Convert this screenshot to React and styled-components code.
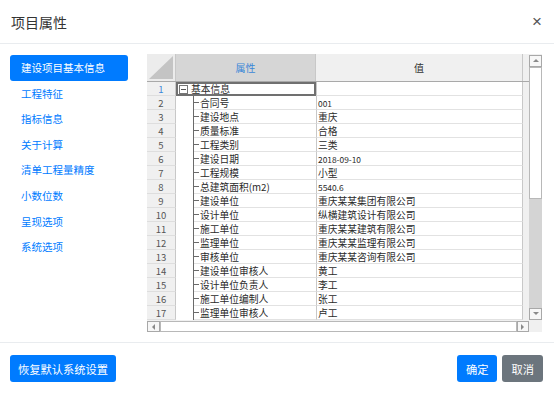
import styled, { createGlobalStyle } from "styled-components";

const GlobalStyle = createGlobalStyle`
  html, body {
    margin: 0;
    padding: 0;
    background: #fff;
  }
  body {
    font-family: "Noto Sans CJK SC", "Noto Sans", sans-serif;
  }
  * {
    box-sizing: border-box;
  }
`;

const Modal = styled.div`
  width: 554px;
  height: 394px;
  display: flex;
  flex-direction: column;
  background: #fff;
  overflow: hidden;
`;

const Header = styled.div`
  height: 44px;
  border-bottom: 1px solid #e9ecef;
  display: flex;
  align-items: center;
  justify-content: space-between;
  padding: 0 12px 0 11px;
`;

const Title = styled.div`
  font-size: 14px;
  color: #333;
`;

const Close = styled.button`
  border: 0;
  background: none;
  padding: 0;
  font-size: 17px;
  line-height: 1;
  color: #555;
  font-family: "Liberation Sans", sans-serif;
`;

const Body = styled.div`
  flex: 1;
  display: flex;
  gap: 19px;
  padding: 10px 12px 10px 10px;
`;

const Sidebar = styled.div`
  width: 118px;
  margin-top: 1px;
  display: flex;
  flex-direction: column;
`;

const NavItem = styled.div`
  height: 25.6px;
  line-height: 25.6px;
  padding: 0 11px;
  font-size: 10.5px;
  border-radius: 3px;
  color: ${(p) => (p.$active ? "#fff" : "#007bff")};
  background: ${(p) => (p.$active ? "#007bff" : "transparent")};
`;

const Grid = styled.div`
  width: 395px;
  height: 278px;
  display: flex;
  background: #f0f0f0;
`;

const Main = styled.div`
  width: 382px;
  display: flex;
  flex-direction: column;
`;

const HeadRow = styled.div`
  height: 28px;
  display: flex;
  border-bottom: 1px solid #a9a9a9;
`;

const Corner = styled.div`
  width: 29px;
  background: #ececec;
  border-right: 1px solid #c8c8c8;
  display: flex;
  align-items: flex-end;
  justify-content: flex-end;
  padding: 0 2px 2px 0;
`;

const ColHead = styled.div`
  width: ${(p) => p.$w}px;
  background: ${(p) => p.$bg};
  color: ${(p) => p.$color};
  border-right: 1px solid #c8c8c8;
  display: flex;
  align-items: center;
  justify-content: center;
  font-size: 10px;
`;

const Rows = styled.div`
  flex: 1;
  overflow: hidden;
  display: flex;
  flex-direction: column;
`;

const Row = styled.div`
  height: 14px;
  flex: none;
  display: flex;
  font-size: 9.75px;
  color: #2a2a2a;
`;

const RowNum = styled.div`
  width: 29px;
  background: #f0f0f0;
  border-right: 1px solid #c8c8c8;
  border-bottom: 1px solid #dedede;
  display: flex;
  align-items: center;
  justify-content: center;
  font-size: 9.5px;
  color: ${(p) => (p.$active ? "#3a87d8" : "#555")};
`;

const GroupCell = styled.div`
  width: 140px;
  background: #fff;
  border: 2px solid #707070;
  display: flex;
  align-items: center;
  gap: 3px;
  padding-left: 1px;
  white-space: nowrap;
`;

const PropCell = styled.div`
  width: 140px;
  display: flex;
  background: #fff;
`;

const Indent = styled.div`
  width: 17px;
  flex: none;
`;

const Branch = styled.div`
  flex: 1;
  position: relative;
  padding-left: 7px;
  display: flex;
  align-items: center;
  border-bottom: 1px solid #e2e2e2;
  white-space: nowrap;

  &::before {
    content: "";
    position: absolute;
    left: 0;
    top: 0;
    bottom: -1px;
    width: 1px;
    background: #6a6a6a;
  }

  &::after {
    content: "";
    position: absolute;
    left: 0;
    top: 6px;
    width: 6px;
    height: 1px;
    background: #6a6a6a;
  }
`;

const ValueCell = styled.div`
  width: 207px;
  background: #fff;
  border-left: 1px solid #c8c8c8;
  border-bottom: 1px solid #e2e2e2;
  border-right: 1px solid #c8c8c8;
  padding-left: 1px;
  display: flex;
  align-items: center;
  white-space: nowrap;
  font-size: ${(p) => (p.$latin ? "8.4px" : "inherit")};
`;

const Filler = styled.div`
  flex: 1;
  background: #f0f0f0;
`;

const HScroll = styled.div`
  height: 11px;
  display: flex;
  background: #f0f0f0;
`;

const VScroll = styled.div`
  width: 13px;
  display: flex;
  flex-direction: column;
  padding-top: 1px;
`;

const ScrollBtn = styled.div`
  width: ${(p) => p.$w || "auto"};
  height: ${(p) => p.$h || "auto"};
  flex: none;
  background: #f7f7f7;
  border: 1px solid #a8a8a8;
  display: flex;
  align-items: center;
  justify-content: center;
`;

const Thumb = styled.div`
  flex: ${(p) => p.$grow || "none"};
  height: ${(p) => p.$h || "auto"};
  background: #fff;
  border: 1px solid #b8b8b8;
`;

const Track = styled.div`
  flex: 1;
  background: #d4d4d4;
`;

const ScrollCorner = styled.div`
  height: 12px;
  flex: none;
  background: #f0f0f0;
`;

const Footer = styled.div`
  height: 52px;
  border-top: 1px solid #e9ecef;
  display: flex;
  align-items: center;
  padding: 0 11px 0 10px;
  gap: 5px;
`;

const Button = styled.button`
  height: 27px;
  border: 0;
  border-radius: 3px;
  padding: 0 ${(p) => p.$pad || 8}px;
  font-family: inherit;
  font-size: 11.25px;
  color: #fff;
  background: ${(p) => (p.$secondary ? "#6c757d" : "#007bff")};
  margin-left: ${(p) => (p.$push ? "auto" : "0")};
`;

const navItems = [
  "建设项目基本信息",
  "工程特征",
  "指标信息",
  "关于计算",
  "清单工程量精度",
  "小数位数",
  "呈现选项",
  "系统选项",
];

const rows = [
  ["合同号", "001"],
  ["建设地点", "重庆"],
  ["质量标准", "合格"],
  ["工程类别", "三类"],
  ["建设日期", "2018-09-10"],
  ["工程规模", "小型"],
  ["总建筑面积(m2)", "5540.6"],
  ["建设单位", "重庆某某集团有限公司"],
  ["设计单位", "纵横建筑设计有限公司"],
  ["施工单位", "重庆某某建筑有限公司"],
  ["监理单位", "重庆某某监理有限公司"],
  ["审核单位", "重庆某某咨询有限公司"],
  ["建设单位审核人", "黄工"],
  ["设计单位负责人", "李工"],
  ["施工单位编制人", "张工"],
  ["监理单位审核人", "卢工"],
];

const Arrow = ({ dir }) => {
  const pts = {
    up: "0,4 3,1 6,4",
    down: "0,1 3,4 6,1",
    left: "4,0 1,3 4,6",
    right: "1,0 4,3 1,6",
  };
  return (
    <svg width="6" height="6" viewBox="0 0 6 6">
      <polygon points={pts[dir]} fill="#8a8a8a" />
    </svg>
  );
};

const App = () => {
  return (
    <>
      <GlobalStyle />
      <Modal>
        <Header>
          <Title>项目属性</Title>
          <Close>×</Close>
        </Header>

        <Body>
          <Sidebar>
            {navItems.map((item, i) => (
              <NavItem key={item} $active={i === 0}>
                {item}
              </NavItem>
            ))}
          </Sidebar>

          <Grid>
            <Main>
              <HeadRow>
                <Corner>
                  <svg width="24" height="23" viewBox="0 0 24 23">
                    <polygon points="24,0 24,23 0,23" fill="#c4c4c4" />
                  </svg>
                </Corner>
                <ColHead $w={140} $bg="#d6d6d6" $color="#3a87d8">
                  属性
                </ColHead>
                <ColHead $w={207} $bg="#f0f0f0" $color="#333">
                  值
                </ColHead>
                <Filler />
              </HeadRow>

              <Rows>
                <Row>
                  <RowNum $active>1</RowNum>
                  <GroupCell>
                    <svg width="9" height="9" viewBox="0 0 9 9">
                      <rect x="0.5" y="0.5" width="8" height="8" fill="#fff" stroke="#777" />
                      <line x1="2" y1="4.5" x2="7" y2="4.5" stroke="#555" />
                    </svg>
                    基本信息
                  </GroupCell>
                  <ValueCell />
                  <Filler />
                </Row>
                {rows.map(([label, value], i) => (
                  <Row key={label}>
                    <RowNum>{i + 2}</RowNum>
                    <PropCell>
                      <Indent />
                      <Branch>{label}</Branch>
                    </PropCell>
                    <ValueCell $latin={/^[\d.-]+$/.test(value)}>{value}</ValueCell>
                    <Filler />
                  </Row>
                ))}
              </Rows>

              <HScroll>
                <ScrollBtn $w="13px">
                  <Arrow dir="left" />
                </ScrollBtn>
                <Thumb $grow="1" />
                <ScrollBtn $w="12px">
                  <Arrow dir="right" />
                </ScrollBtn>
              </HScroll>
            </Main>

            <VScroll>
              <ScrollBtn $h="12px">
                <Arrow dir="up" />
              </ScrollBtn>
              <Thumb $h="132px" />
              <Track />
              <ScrollBtn $h="12px">
                <Arrow dir="down" />
              </ScrollBtn>
              <ScrollCorner />
            </VScroll>
          </Grid>
        </Body>

        <Footer>
          <Button>恢复默认系统设置</Button>
          <Button $push $pad={9}>确定</Button>
          <Button $secondary $pad={9}>取消</Button>
        </Footer>
      </Modal>
    </>
  );
};

export default App;
